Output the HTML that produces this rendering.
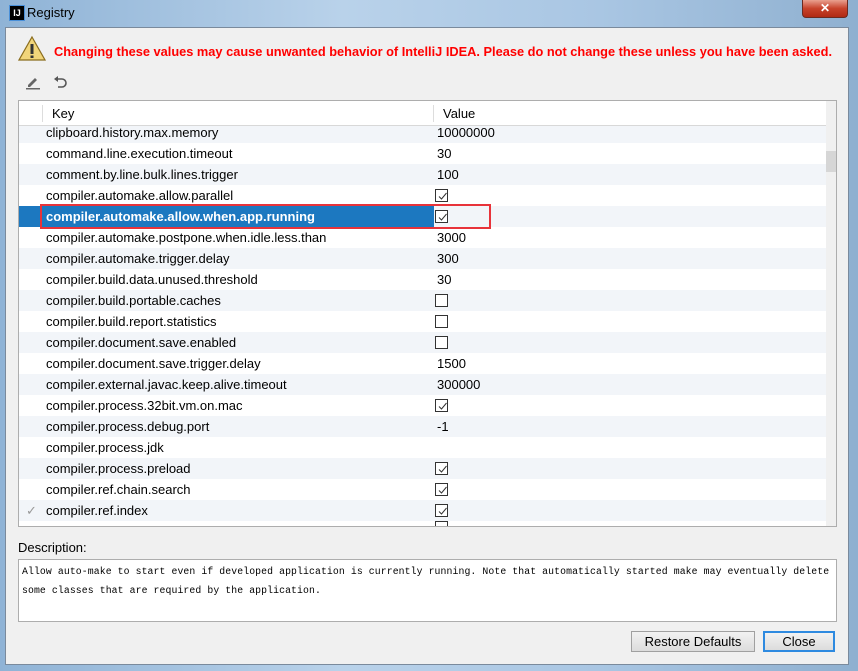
<!DOCTYPE html>
<html><head><style>
*{margin:0;padding:0;box-sizing:border-box}
body{width:858px;height:671px;overflow:hidden;background:linear-gradient(90deg,#8fb3d6,#b9d2ea 40%,#a9c6e3 70%,#8fb0d0);font-family:"Liberation Sans",sans-serif;position:relative}
.a{position:absolute}
#panel{left:5px;top:27px;width:844px;height:638px;background:#f0f0f0;border:1px solid #7a8a9c}
.row{position:absolute;left:0;width:807px;height:21px;font-size:13px;line-height:21px;color:#000}
.row .k{position:absolute;left:27px}
.row .v{position:absolute;left:418px}
.cb{position:absolute;left:416px;top:4px;width:13px;height:13px;border:1px solid #333;background:#fff}
.cb svg{position:absolute;left:1px;top:1px}
</style></head><body>
<div class="a" style="left:9px;top:5px;width:16px;height:16px;background:#000;border:1px solid #4a90d9;color:#fff;font-size:9px;font-weight:bold;line-height:14px;text-align:center">IJ</div>
<div class="a" style="left:27px;top:5px;font-size:13px;color:#000">Registry</div>
<div class="a" style="left:802px;top:0;width:46px;height:18px;background:linear-gradient(#e9a08f,#c7422a 50%,#b02a14);border:1px solid #6b2a20;border-top:none;border-radius:0 0 4px 4px;color:#fff;font-size:12px;font-weight:bold;text-align:center;line-height:16px">✕</div>
<div id="panel" class="a"></div>
<svg class="a" style="left:18px;top:35px" width="28" height="27"><polygon points="14,2 27,25 1,25" fill="#f1d57a" stroke="#8a6d1e" stroke-width="1.2"/><rect x="12.5" y="9" width="3" height="10" fill="#333"/><rect x="12.5" y="20.5" width="3" height="2.5" fill="#333"/></svg>
<div class="a" style="left:54px;top:44px;font-size:12.8px;font-weight:bold;color:#ff0000;white-space:nowrap">Changing these values may cause unwanted behavior of IntelliJ IDEA. Please do not change these unless you have been asked.</div>
<svg class="a" style="left:25px;top:74px" width="16" height="16"><path d="M3 11 L10 4 L12 6 L5 13 L3 13Z" fill="#666"/><rect x="1" y="14" width="14" height="1.5" fill="#666"/></svg>
<svg class="a" style="left:52px;top:74px" width="16" height="16"><path d="M4 5 H10 A4 4 0 0 1 10 13 H6" fill="none" stroke="#555" stroke-width="1.6"/><path d="M2 5 L6 2 L6 8Z" fill="#555"/></svg>
<div class="a" style="left:18px;top:100px;width:819px;height:427px;border:1px solid #adadad;background:#fff;overflow:hidden">
 <div class="a" style="left:0;top:0;width:807px;height:25px;background:#fff;border-bottom:1px solid #d8d8d8;z-index:2;font-size:13px">
  <div class="a" style="left:23px;top:4px;width:1px;height:17px;background:#ddd"></div>
  <div class="a" style="left:33px;top:5px">Key</div>
  <div class="a" style="left:414px;top:4px;width:1px;height:17px;background:#ddd"></div>
  <div class="a" style="left:424px;top:5px">Value</div>
 </div>
 <div class="a" style="left:807px;top:0;width:11px;height:425px;background:#f0f0f0"><div class="a" style="left:0;top:50px;width:11px;height:21px;background:#d6d6d6"></div></div>
 <div class="a" style="left:0;top:21px;width:807px;height:404px">
  <div class="row" style="top:0;background:#f2f5f9"><span class="k">clipboard.history.max.memory</span><span class="v">10000000</span></div>
  <div class="row" style="top:21px"><span class="k">command.line.execution.timeout</span><span class="v">30</span></div>
  <div class="row" style="top:42px;background:#f2f5f9"><span class="k">comment.by.line.bulk.lines.trigger</span><span class="v">100</span></div>
  <div class="row" style="top:63px"><span class="k">compiler.automake.allow.parallel</span><span class="cb"><svg width="11" height="11"><polyline points="2,5.5 4.5,8 9.5,2" fill="none" stroke="#333" stroke-width="1"/></svg></span></div>
  <div class="row" style="top:84px;background:#1c78c0;width:415px;color:#fff;font-weight:bold"><span class="k">compiler.automake.allow.when.app.running</span></div>
  <div class="row" style="top:84px;left:415px;width:392px;background:#f2f5f9"><span class="cb" style="left:1px"><svg width="11" height="11"><polyline points="2,5.5 4.5,8 9.5,2" fill="none" stroke="#333" stroke-width="1"/></svg></span></div>
  <div class="row" style="top:105px"><span class="k">compiler.automake.postpone.when.idle.less.than</span><span class="v">3000</span></div>
  <div class="row" style="top:126px;background:#f2f5f9"><span class="k">compiler.automake.trigger.delay</span><span class="v">300</span></div>
  <div class="row" style="top:147px"><span class="k">compiler.build.data.unused.threshold</span><span class="v">30</span></div>
  <div class="row" style="top:168px;background:#f2f5f9"><span class="k">compiler.build.portable.caches</span><span class="cb"></span></div>
  <div class="row" style="top:189px"><span class="k">compiler.build.report.statistics</span><span class="cb"></span></div>
  <div class="row" style="top:210px;background:#f2f5f9"><span class="k">compiler.document.save.enabled</span><span class="cb"></span></div>
  <div class="row" style="top:231px"><span class="k">compiler.document.save.trigger.delay</span><span class="v">1500</span></div>
  <div class="row" style="top:252px;background:#f2f5f9"><span class="k">compiler.external.javac.keep.alive.timeout</span><span class="v">300000</span></div>
  <div class="row" style="top:273px"><span class="k">compiler.process.32bit.vm.on.mac</span><span class="cb"><svg width="11" height="11"><polyline points="2,5.5 4.5,8 9.5,2" fill="none" stroke="#333" stroke-width="1"/></svg></span></div>
  <div class="row" style="top:294px;background:#f2f5f9"><span class="k">compiler.process.debug.port</span><span class="v">-1</span></div>
  <div class="row" style="top:315px"><span class="k">compiler.process.jdk</span></div>
  <div class="row" style="top:336px;background:#f2f5f9"><span class="k">compiler.process.preload</span><span class="cb"><svg width="11" height="11"><polyline points="2,5.5 4.5,8 9.5,2" fill="none" stroke="#333" stroke-width="1"/></svg></span></div>
  <div class="row" style="top:357px"><span class="k">compiler.ref.chain.search</span><span class="cb"><svg width="11" height="11"><polyline points="2,5.5 4.5,8 9.5,2" fill="none" stroke="#333" stroke-width="1"/></svg></span></div>
  <div class="row" style="top:378px;background:#f2f5f9"><span class="a" style="left:7px;color:#999">✓</span><span class="k">compiler.ref.index</span><span class="cb"><svg width="11" height="11"><polyline points="2,5.5 4.5,8 9.5,2" fill="none" stroke="#333" stroke-width="1"/></svg></span></div>
  <div class="row" style="top:399px"><span class="cb" style="top:0"></span></div>
 </div>
</div>
<div class="a" style="left:40px;top:204px;width:451px;height:25px;border:2px solid #e8333a"></div>
<div class="a" style="left:18px;top:540px;font-size:13px">Description:</div>
<div class="a" style="left:18px;top:559px;width:819px;height:63px;background:#fff;border:1px solid #adadad;font-family:'Liberation Mono',monospace;font-size:9.8px;letter-spacing:0.1px;line-height:19px;padding:2px 0 0 3px;white-space:nowrap">Allow auto-make to start even if developed application is currently running. Note that automatically started make may eventually delete<br>some classes that are required by the application.</div>
<div class="a" style="left:631px;top:631px;width:124px;height:21px;background:linear-gradient(#f2f2f2,#dcdcdc);border:1px solid #a0a0a0;font-size:13px;text-align:center;line-height:19px">Restore Defaults</div>
<div class="a" style="left:763px;top:631px;width:72px;height:21px;background:linear-gradient(#f2f2f2,#dcdcdc);border:2px solid #2e8ae0;font-size:13px;text-align:center;line-height:17px">Close</div>
</body></html>
